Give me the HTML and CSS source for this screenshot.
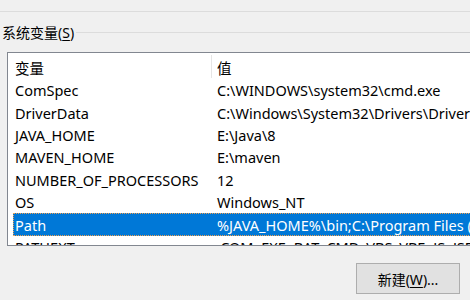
FILE: index.html
```html
<!DOCTYPE html>
<html lang="zh-CN">
<head>
<meta charset="utf-8">
<link rel="stylesheet" href="styles.css">
</head>
<body>
<div class="sep"></div>
<div class="legend"><span class="legend-text">系统变量(<u>S</u>)</span><span class="legend-line"></span></div>
<div class="list">
  <div class="header">
    <div class="col1 hcell">变量</div>
    <div class="col2 hcell">值</div>
  </div>
  <div class="row"><div class="col1">ComSpec</div><div class="col2">C:\WINDOWS\system32\cmd.exe</div></div>
  <div class="row"><div class="col1">DriverData</div><div class="col2">C:\Windows\System32\Drivers\DriverData</div></div>
  <div class="row"><div class="col1">JAVA_HOME</div><div class="col2">E:\Java\8</div></div>
  <div class="row"><div class="col1">MAVEN_HOME</div><div class="col2">E:\maven</div></div>
  <div class="row"><div class="col1">NUMBER_OF_PROCESSORS</div><div class="col2">12</div></div>
  <div class="row"><div class="col1">OS</div><div class="col2">Windows_NT</div></div>
  <div class="row selected"><div class="col1">Path</div><div class="col2">%JAVA_HOME%\bin;C:\Program Files (x86)\Common Files</div></div>
  <div class="row"><div class="col1">PATHEXT</div><div class="col2">.COM;.EXE;.BAT;.CMD;.VBS;.VBE;.JS;.JSE;.WSF;.WSH;.MSC</div></div>
</div>
<div class="footer">
  <button class="btn">新建(<u>W</u>)...</button>
</div>
</body>
</html>
```
FILE: styles.css
```css
html, body {
  margin: 0;
  padding: 0;
  background: #f0f0f0;
  width: 470px;
  height: 300px;
  overflow: hidden;
}
body {
  font-family: "Noto Sans", "Noto Sans CJK SC", sans-serif;
  font-size: 14.5px;
  color: #000;
}
.sep {
  height: 11px;
  border-bottom: 1px solid #dcdcdc;
}
.legend {
  display: flex;
  align-items: center;
  height: 20px;
  margin-top: 11px;
  padding-left: 2px;
}
.legend-text {
  white-space: nowrap;
  line-height: 20px;
  font-size: 14px;
}
.legend-text u, .btn u {
  text-decoration-thickness: 1px;
  text-underline-offset: 2px;
}
.legend-line {
  flex: 1;
  height: 0;
  border-top: 1px solid #dcdcdc;
  margin-left: 2px;
  margin-top: -2px;
}
.list {
  margin-top: 9px;
  margin-left: 7px;
  width: 463px;
  height: 192px;
  background: #fff;
  border: 1px solid #828790;
  border-right: none;
  overflow: hidden;
  box-sizing: content-box;
}
.header {
  display: flex;
  height: 26px;
  align-items: center;
}
.hcell {
  height: 23px;
  line-height: 26px;
}
.header .col1 {
  border-right: 1px solid #e5e5e5;
}
.col1 {
  width: 196px;
  flex: none;
  padding-left: 7px;
  white-space: nowrap;
}
.col2 {
  padding-left: 5px;
  white-space: nowrap;
}
.row {
  display: flex;
  align-items: center;
  height: 22.4px;
  margin-left: 5px;
  overflow: hidden;
}
.row .col1 {
  width: 198px;
  padding-left: 2px;
}
.row .col2 {
  padding-left: 4px;
}
.row.selected {
  background: #0078d7;
  color: #fff;
  outline: 1px dotted #f0a050;
  outline-offset: -1px;
}
.footer {
  display: flex;
  justify-content: flex-end;
  padding-right: 10px;
  margin-top: 17px;
}
.btn {
  width: 104px;
  height: 31px;
  background: #e1e1e1;
  border: 1px solid #adadad;
  font-family: "Noto Sans", "Noto Sans CJK SC", sans-serif;
  font-size: 14px;
  color: #000;
  padding: 0;
}
```
